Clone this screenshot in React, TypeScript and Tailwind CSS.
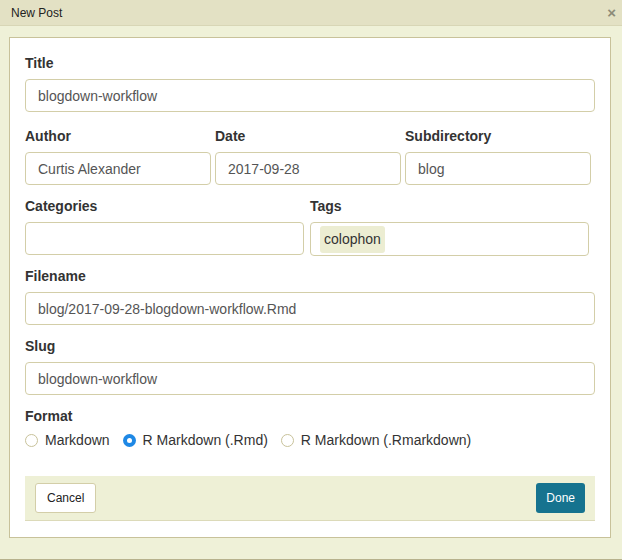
export default function App() {
  const inputCls =
    "h-[33px] w-full rounded-[4px] border border-[#d3cea8] bg-white px-3 text-[14px] text-[#555] outline-none";
  const labelCls = "mb-[7px] block text-[14px] font-bold leading-[17px] text-[#333]";

  return (
    <div
      className="flex h-[560px] w-[622px] flex-col border-b border-[#b7b28d] bg-[#eff1d8]"
      style={{ fontFamily: '"Liberation Sans", Arial, sans-serif' }}
    >
      {/* title bar */}
      <div className="flex h-[26px] shrink-0 items-center justify-between border-b border-[#d8d6b6] bg-[#e3e1c4] pl-[11px] pr-[6px]">
        <span className="text-[12px] text-[#222]">New Post</span>
        <span className="text-[15px] font-bold leading-none text-[#8c8b78]">×</span>
      </div>

      <div className="pl-[9px] pr-[11px] pt-[11px]">
        <div className="border border-[#c8c29a] bg-white pl-[15px] pr-[15px] pt-[17px] pb-[16px]">
          <div>
            <label className={labelCls}>Title</label>
            <input className={inputCls} defaultValue="blogdown-workflow" />
          </div>

          <div className="mt-[16px] flex gap-[4px] pr-[4px]">
            <div className="flex-1">
              <label className={labelCls}>Author</label>
              <input className={inputCls} defaultValue="Curtis Alexander" />
            </div>
            <div className="flex-1">
              <label className={labelCls}>Date</label>
              <input className={inputCls} defaultValue="2017-09-28" />
            </div>
            <div className="flex-1">
              <label className={labelCls}>Subdirectory</label>
              <input className={inputCls} defaultValue="blog" />
            </div>
          </div>

          <div className="mt-[13px] flex gap-[6px] pr-[6px]">
            <div className="flex-1">
              <label className={labelCls}>Categories</label>
              <input className={inputCls} defaultValue="" />
            </div>
            <div className="flex-1">
              <label className={labelCls}>Tags</label>
              <div className="flex h-[34px] w-full items-center rounded-[4px] border border-[#d3cea8] bg-white px-[9px]">
                <span className="rounded-[3px] bg-[#ecedd2] px-[4px] py-[3px] text-[14px] text-[#333]">
                  colophon
                </span>
              </div>
            </div>
          </div>

          <div className="mt-[12px]">
            <label className={labelCls}>Filename</label>
            <input
              className={inputCls}
              defaultValue="blog/2017-09-28-blogdown-workflow.Rmd"
            />
          </div>

          <div className="mt-[13px]">
            <label className={labelCls}>Slug</label>
            <input className={inputCls} defaultValue="blogdown-workflow" />
          </div>

          <div className="mt-[13px]">
            <label className={labelCls}>Format</label>
            <div className="flex h-[17px] items-center text-[14px] text-[#333]">
              <span className="flex items-center">
                <span className="mr-[7px] h-[13px] w-[13px] rounded-full border border-[#c8c29a] bg-white" />
                Markdown
              </span>
              <span className="ml-[13px] flex items-center">
                <span className="mr-[7px] flex h-[13px] w-[13px] items-center justify-center rounded-full bg-[#1e88e5]">
                  <span className="h-[5px] w-[5px] rounded-full bg-white" />
                </span>
                R Markdown (.Rmd)
              </span>
              <span className="ml-[13px] flex items-center">
                <span className="mr-[7px] h-[13px] w-[13px] rounded-full border border-[#c8c29a] bg-white" />
                R Markdown (.Rmarkdown)
              </span>
            </div>
          </div>

          <div className="mt-[27px] flex h-[45px] items-center justify-between border-b border-[#dcdab9] bg-[#eef0d6] px-[10px]">
            <button className="h-[30px] rounded-[3px] border border-[#d3cea8] bg-white px-[11px] text-[12px] text-[#222]">
              Cancel
            </button>
            <button className="h-[30px] rounded-[3px] bg-[#16738f] px-[10px] text-[12px] text-white">
              Done
            </button>
          </div>
        </div>
      </div>
    </div>
  );
}
